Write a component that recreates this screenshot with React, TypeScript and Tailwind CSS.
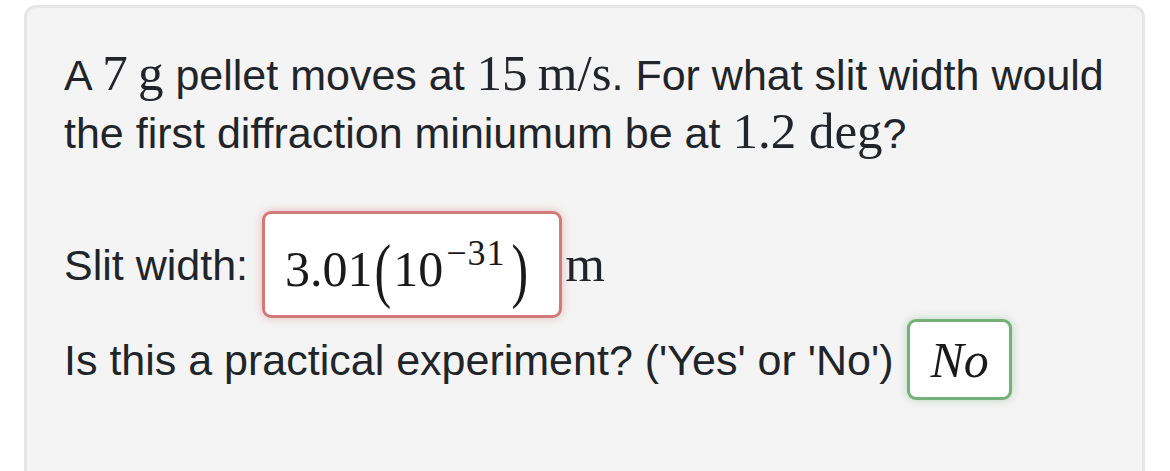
import React from 'react';

const sans = "font-['Liberation_Sans',Arial,sans-serif]";
const serif = "font-['Liberation_Serif','Times_New_Roman',serif]";

function M({ children }: { children: React.ReactNode }) {
  return <span className={`${serif} text-[51px] leading-none`}>{children}</span>;
}

export default function App() {
  return (
    <div className="min-h-[471px] bg-white pt-[5px] pl-[24px] pr-[25px] overflow-hidden">
      <div
        className={`${sans} h-[520px] rounded-[12px] border-[3px] border-[#e6e6e6] bg-[#f4f4f4] px-[37px] pt-[38px] text-[43px] leading-[58px] text-[#212529]`}
      >
        <p className="whitespace-nowrap">
          A <M>7&thinsp;g</M> pellet moves at <M>15&thinsp;m/s</M>. For what slit width would
          <br />
          the first diffraction miniumum be at <M>1.2 deg</M>?
        </p>

        <div className="mt-[49px] flex items-center">
          <span>Slit width:</span>
          <div className="ml-[14px] flex h-[107px] items-center rounded-[9px] border-[3px] border-[#d27a78] bg-white pl-[20px] pr-[31px] shadow-[0_0_10px_rgba(210,122,120,0.45)]">
            <span className={`${serif} mt-[8px] flex items-baseline text-[50px] leading-none text-[#1a1a1a]`}>
              <span>3.01</span>
              <span className="inline-block origin-center scale-y-[1.45] px-[2px]">(</span>
              <span>10</span>
              <span className="relative top-[-21px] ml-[3px] text-[36px] tracking-[1px]">−31</span>
              <span className="inline-block origin-center scale-y-[1.45] pl-[6px]">)</span>
            </span>
          </div>
          <span className={`${serif} ml-[3px] text-[51px] leading-none`}>m</span>
        </div>

        <div className="mt-[1px] flex items-center">
          <span>Is this a practical experiment? ('Yes' or 'No')</span>
          <div className="ml-[14px] flex h-[81px] items-center rounded-[9px] border-[3px] border-[#74b077] bg-white pl-[20px] pr-[20px] shadow-[0_0_10px_rgba(116,176,119,0.45)]">
            <span className={`${serif} text-[50px] italic leading-none text-[#1a1a1a]`}>No</span>
          </div>
        </div>
      </div>
    </div>
  );
}
